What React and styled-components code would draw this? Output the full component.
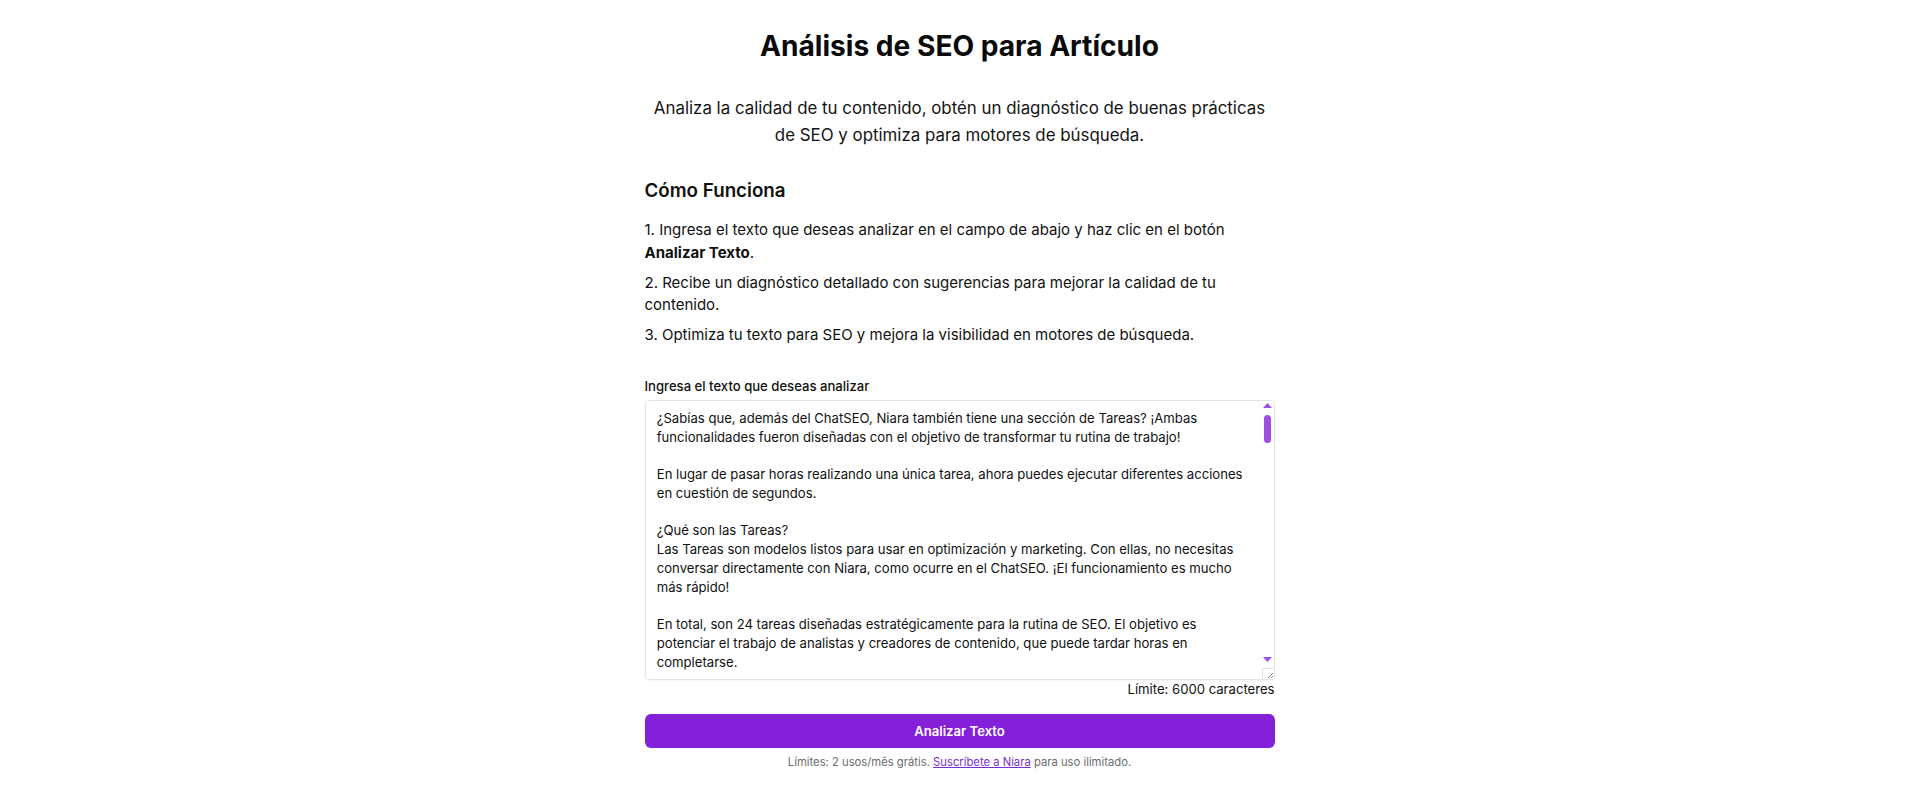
import React from "react";
import styled, { createGlobalStyle } from "styled-components";

const GlobalStyle = createGlobalStyle`
  html {
    font-size: 15px;
  }
  body {
    margin: 0;
    background: #ffffff;
    color: #111111;
    font-family: Inter, "Noto Sans", "Liberation Sans", sans-serif;
  }
`;

const Page = styled.main`
  max-width: 42rem;
  margin: 0 auto;
  padding-top: 30px;
`;

const Title = styled.h1`
  margin: 0;
  font-size: 1.875rem;
  line-height: 2.25rem;
  font-weight: 700;
  text-align: center;
  color: #0a0a0a;
`;

const Subtitle = styled.p`
  margin: 31.5px 0 0;
  font-size: 1.125rem;
  line-height: 1.75rem;
  text-align: center;
  color: #141414;
`;

const SectionTitle = styled.h2`
  margin: 2rem 0 0;
  font-size: 1.25rem;
  line-height: 1.75rem;
  font-weight: 600;
`;

const Steps = styled.ol`
  list-style: none;
  margin: 1rem 0 0;
  padding: 0;
`;

const Step = styled.li`
  font-size: 1rem;
  line-height: 1.5rem;

  & + & {
    margin-top: 0.5rem;
  }

  strong {
    font-weight: 700;
  }
`;

const Field = styled.div`
  margin-top: 2rem;
`;

const Label = styled.label`
  display: block;
  margin-bottom: 5px;
  font-size: 0.875rem;
  line-height: 1.25rem;
  font-weight: 500;
`;

const TextAreaBox = styled.div`
  position: relative;
`;

const TextArea = styled.textarea`
  display: block;
  box-sizing: border-box;
  width: 100%;
  height: 280px;
  margin: 0;
  padding: 0.5rem calc(0.75rem + 12px) 0.5rem 0.75rem;
  border: 1px solid #e3e3e6;
  border-radius: 4px;
  box-shadow: 0 1px 2px rgba(0, 0, 0, 0.05);
  font-family: inherit;
  font-size: 0.875rem;
  line-height: 1.25rem;
  color: #111111;
  background: #ffffff;
  outline: none;
  resize: none;
`;

/* drawn scrollbar: the headless browser hides native ones */
const ScrollRail = styled.div`
  position: absolute;
  top: 1px;
  right: 1px;
  bottom: 1px;
  width: 12px;
  display: flex;
  flex-direction: column;
  align-items: center;
  pointer-events: none;
`;

const Arrow = styled.svg`
  display: block;
  width: 9px;
  height: 5px;
  margin-top: ${(p) => p.$offset || 0}px;
  fill: #9c4fe3;
`;

const Thumb = styled.div`
  width: 7px;
  height: 28px;
  margin-top: 7px;
  border-radius: 4px;
  background: #9c4fe3;
`;

const RailSpacer = styled.div`
  flex: 1;
`;

const Corner = styled.div`
  box-sizing: border-box;
  width: 12px;
  height: 11px;
  margin-top: 6px;
  border-top: 1px solid #e2e2e4;
  border-left: 1px solid #e2e2e4;
  display: flex;
  align-items: flex-end;
  justify-content: flex-end;

  svg {
    display: block;
  }
`;

const Counter = styled.div`
  text-align: right;
  font-size: 0.875rem;
  line-height: 1.25rem;
`;

const SubmitButton = styled.button`
  display: block;
  width: 100%;
  margin-top: 1rem;
  padding: 0.5rem 1rem;
  border: none;
  border-radius: 6px;
  background: #8420d8;
  color: #ffffff;
  font-family: inherit;
  font-size: 0.875rem;
  line-height: 1.25rem;
  font-weight: 600;
  cursor: pointer;
`;

const Note = styled.p`
  margin: 0.5rem 0 0;
  font-size: 0.75rem;
  line-height: 1rem;
  text-align: center;
  color: #6b6b70;
`;

const NoteLink = styled.a`
  color: #7b2fd0;
  text-decoration: underline;
`;

const sampleText = `¿Sabías que, además del ChatSEO, Niara también tiene una sección de Tareas? ¡Ambas funcionalidades fueron diseñadas con el objetivo de transformar tu rutina de trabajo!

En lugar de pasar horas realizando una única tarea, ahora puedes ejecutar diferentes acciones en cuestión de segundos.

¿Qué son las Tareas?
Las Tareas son modelos listos para usar en optimización y marketing. Con ellas, no necesitas conversar directamente con Niara, como ocurre en el ChatSEO. ¡El funcionamiento es mucho más rápido!

En total, son 24 tareas diseñadas estratégicamente para la rutina de SEO. El objetivo es potenciar el trabajo de analistas y creadores de contenido, que puede tardar horas en completarse.

¿Cómo funcionan las Tareas?
Para usar una Tarea, basta con elegir el modelo que mejor se adapta a tu necesidad, completar los campos solicitados y hacer clic en generar. En pocos segundos, Niara entrega el resultado listo para revisar, editar y publicar.

Algunas de las Tareas más utilizadas son:
- Generación de títulos SEO optimizados para aumentar la tasa de clics en los resultados de búsqueda;
- Creación de meta descripciones atractivas y dentro del límite de caracteres recomendado;
- Sugerencias de palabras clave secundarias y términos relacionados con el tema principal;
- Elaboración de estructuras de contenido con encabezados H2 y H3 bien organizados;
- Reescritura de párrafos para mejorar la legibilidad y la fluidez del texto;
- Producción de preguntas frecuentes (FAQ) basadas en las dudas reales de los usuarios.

¿Por qué usar las Tareas en tu rutina de SEO?
La principal ventaja es la productividad. Actividades repetitivas, como escribir decenas de meta descripciones o planificar la estructura de varios artículos, se resuelven en minutos. Así, el equipo puede dedicar más tiempo a la estrategia, al análisis de resultados y a la creatividad.

Además, las Tareas siguen las buenas prácticas de SEO. Esto significa que el contenido generado ya considera aspectos como la densidad de palabras clave, el tamaño ideal de los títulos y la organización jerárquica de la información.

Otro punto importante es la consistencia. Cuando varias personas trabajan en un mismo proyecto, es común que cada una escriba de una forma diferente. Con las Tareas, todos parten de la misma base, lo que garantiza un estándar de calidad en todas las publicaciones.

ChatSEO y Tareas: ¿cuál elegir?
Las dos funcionalidades se complementan. El ChatSEO es ideal cuando necesitas una conversación más abierta, con idas y vueltas, para explorar ideas, resolver dudas o ajustar detalles del contenido. Las Tareas, por otro lado, son perfectas cuando ya sabes exactamente lo que necesitas y quieres un resultado rápido y objetivo.

En la práctica, muchos usuarios comienzan con una Tarea para generar la primera versión de un contenido y después utilizan el ChatSEO para refinar el texto, agregar ejemplos o adaptar el tono de voz a la marca.

Conclusión
Si buscas ganar tiempo sin perder calidad, las Tareas de Niara son una excelente opción. Prueba los diferentes modelos disponibles, descubre cuáles se adaptan mejor a tu flujo de trabajo y acompaña la evolución de tus resultados en los motores de búsqueda.`;

const App = () => (
  <>
    <GlobalStyle />
    <Page>
      <Title>Análisis de SEO para Artículo</Title>
      <Subtitle>
        Analiza la calidad de tu contenido, obtén un diagnóstico de buenas prácticas de SEO y
        optimiza para motores de búsqueda.
      </Subtitle>

      <SectionTitle>Cómo Funciona</SectionTitle>
      <Steps>
        <Step>
          1. Ingresa el texto que deseas analizar en el campo de abajo y haz clic en el botón{" "}
          <strong>Analizar Texto</strong>.
        </Step>
        <Step>2. Recibe un diagnóstico detallado con sugerencias para mejorar la calidad de tu contenido.</Step>
        <Step>3. Optimiza tu texto para SEO y mejora la visibilidad en motores de búsqueda.</Step>
      </Steps>

      <Field>
        <Label htmlFor="seo-text">Ingresa el texto que deseas analizar</Label>
        <TextAreaBox>
          <TextArea id="seo-text" maxLength={6000} defaultValue={sampleText} />
          <ScrollRail aria-hidden="true">
            <Arrow $offset={2} viewBox="0 0 9 5">
              <polygon points="4.5,0 9,5 0,5" />
            </Arrow>
            <Thumb />
            <RailSpacer />
            <Arrow viewBox="0 0 9 5">
              <polygon points="0,0 9,0 4.5,5" />
            </Arrow>
            <Corner>
              <svg width="8" height="8" viewBox="0 0 8 8">
                <path d="M7 2 L2 7 M7 5 L5 7" stroke="#8a8a8e" strokeWidth="1" fill="none" />
              </svg>
            </Corner>
          </ScrollRail>
        </TextAreaBox>
        <Counter>Límite: 6000 caracteres</Counter>
      </Field>

      <SubmitButton type="button">Analizar Texto</SubmitButton>
      <Note>
        Límites: 2 usos/mês grátis. <NoteLink href="#">Suscríbete a Niara</NoteLink> para uso ilimitado.
      </Note>
    </Page>
  </>
);

export default App;
